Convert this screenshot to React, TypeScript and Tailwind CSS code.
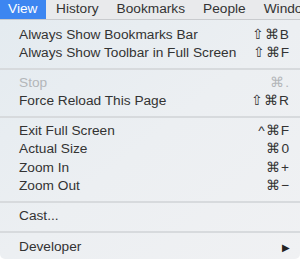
import { Fragment } from 'react'

type Item = { label: string; keys?: string; disabled?: boolean; submenu?: boolean }

const GROUPS: Item[][] = [
  [
    { label: 'Always Show Bookmarks Bar', keys: '⇧⌘B' },
    { label: 'Always Show Toolbar in Full Screen', keys: '⇧⌘F' },
  ],
  [
    { label: 'Stop', keys: '⌘.', disabled: true },
    { label: 'Force Reload This Page', keys: '⇧⌘R' },
  ],
  [
    { label: 'Exit Full Screen', keys: '^⌘F' },
    { label: 'Actual Size', keys: '⌘0' },
    { label: 'Zoom In', keys: '⌘+' },
    { label: 'Zoom Out', keys: '⌘−' },
  ],
  [{ label: 'Cast...' }],
  [{ label: 'Developer', submenu: true }],
]

const MENUS = ['History', 'Bookmarks', 'People', 'Window']

export default function App() {
  return (
    <div className="w-[300px] h-[259px] overflow-hidden bg-white text-[13.7px] text-[#333] font-['Liberation_Sans',Arial,sans-serif]">
      {/* Menu bar */}
      <div className="flex h-[20px] bg-[#e9eaec] border-b border-[#c9cbce] items-center overflow-hidden">
        <div className="h-full shrink-0 pl-[8px] bg-[#3d86f1] text-white flex items-center w-[46px]">View</div>
        <div className="flex shrink-0 gap-[18px] pl-[10px] whitespace-nowrap">
          {MENUS.map(m => (
            <span key={m}>{m}</span>
          ))}
        </div>
      </div>

      {/* Dropdown */}
      <div className="h-[239px] rounded-b-[5px] bg-gradient-to-br from-[#e4ebf0] via-[#eceff2] to-[#f0f1f3] pt-[6px]">
        {GROUPS.map((group, gi) => (
          <Fragment key={gi}>
            {gi > 0 && <div className={`h-[2px] bg-[#d7dadd] ${gi === 4 ? 'mt-[5px] mb-[6px]' : 'my-[4.5px]'}`} />}
            {group.map(item => (
              <div
                key={item.label}
                className={`flex items-center h-[18.5px] pl-[19px] pr-[10px] ${item.disabled ? 'text-[#b3b6b9]' : ''}`}
              >
                <span className="flex-1 whitespace-nowrap">{item.label}</span>
                {item.keys && <span className="tracking-[1px]">{item.keys}</span>}
                {item.submenu && <span className="text-[10px] text-[#222]">▶</span>}
              </div>
            ))}
          </Fragment>
        ))}
      </div>
    </div>
  )
}
